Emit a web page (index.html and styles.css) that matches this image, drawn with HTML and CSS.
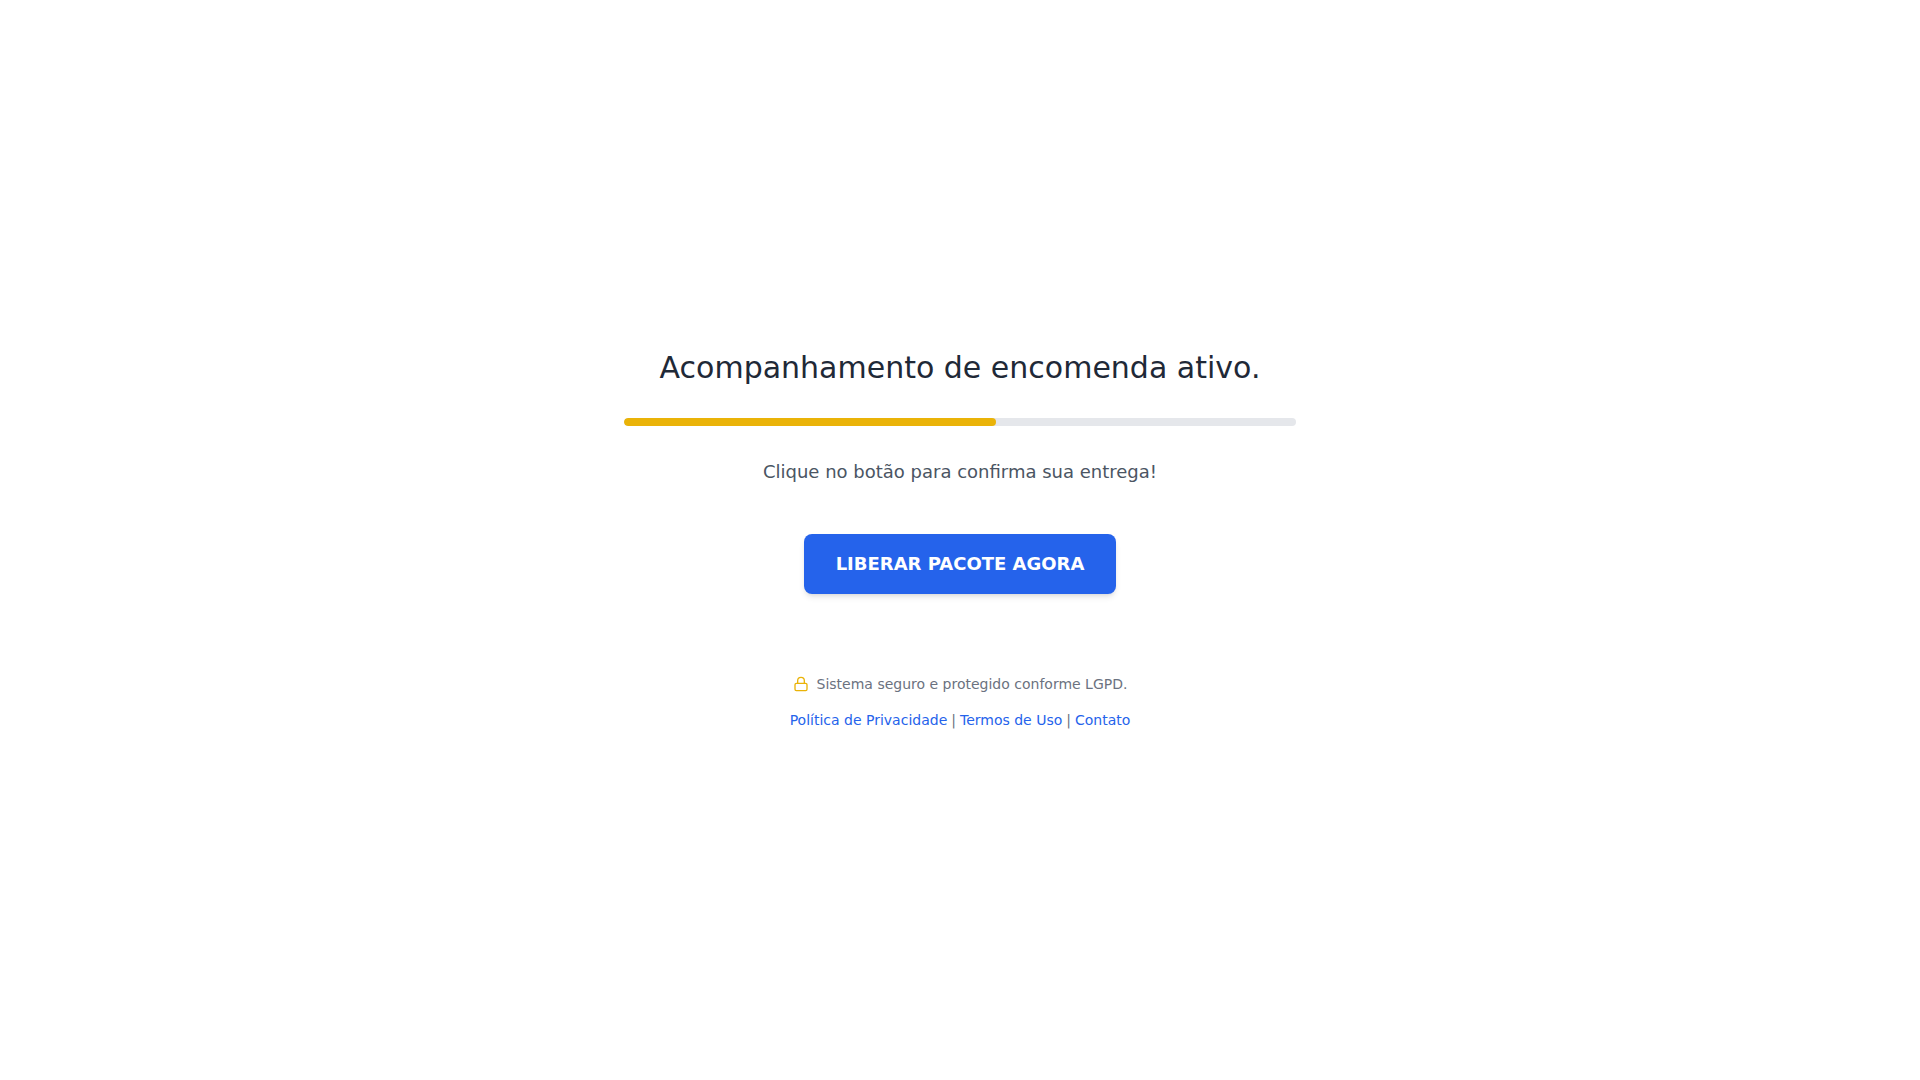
FILE: index.html
```html
<!DOCTYPE html>
<html lang="pt-BR">
<head>
<meta charset="utf-8">
<meta name="viewport" content="width=device-width, initial-scale=1">
<title>Acompanhamento de encomenda</title>
<link rel="stylesheet" href="styles.css">
</head>
<body>
<main class="tracking">
  <h1 class="title">Acompanhamento de encomenda ativo.</h1>
  <div class="progress"><div class="progress-bar" style="width: 55.4%"></div></div>
  <p class="message">Clique no botão para confirma sua entrega!</p>
  <button class="cta" type="button">LIBERAR PACOTE AGORA</button>
  <footer class="footer">
    <p class="secure">
      <svg class="lock" viewBox="0 0 24 24" fill="none" stroke="currentColor" stroke-width="2" stroke-linecap="round" stroke-linejoin="round" aria-hidden="true"><rect x="3" y="11" width="18" height="11" rx="2" ry="2"/><path d="M7 11V7a5 5 0 0 1 10 0v4"/></svg>
      <span>Sistema seguro e protegido conforme LGPD.</span>
    </p>
    <nav class="links">
      <a href="#">Política de Privacidade</a>
      <span>|</span>
      <a href="#">Termos de Uso</a>
      <span>|</span>
      <a href="#">Contato</a>
    </nav>
  </footer>
</main>
</body>
</html>
```
FILE: styles.css
```css
* {
  box-sizing: border-box;
  margin: 0;
}

body {
  min-height: 100vh;
  display: flex;
  align-items: center;
  justify-content: center;
  background: #fff;
  font-family: "DejaVu Sans", sans-serif;
}

.tracking {
  width: 100%;
  max-width: 672px;
  text-align: center;
}

.title {
  margin-bottom: 32px;
  color: #1f2937;
  font-size: 30px;
  font-weight: 400;
  line-height: 36px;
}

.progress {
  height: 8px;
  margin-bottom: 32px;
  overflow: hidden;
  border-radius: 4px;
  background: #e5e7eb;
}

.progress-bar {
  height: 100%;
  border-radius: 4px;
  background: #eab308;
}

.message {
  margin-bottom: 48px;
  color: #4b5563;
  font-size: 18px;
  line-height: 28px;
}

.cta {
  padding: 16px 32px;
  border: 0;
  border-radius: 8px;
  background: #2563eb;
  box-shadow: 0 4px 6px -1px rgb(0 0 0 / 0.1), 0 2px 4px -2px rgb(0 0 0 / 0.1);
  color: #fff;
  font-family: inherit;
  font-size: 18px;
  font-weight: 700;
  line-height: 28px;
  cursor: pointer;
}

.footer {
  margin-top: 80px;
  color: #6b7280;
  font-size: 14px;
  line-height: 20px;
}

.secure {
  display: flex;
  align-items: center;
  justify-content: center;
  gap: 8px;
  margin-bottom: 16px;
}

.lock {
  width: 16px;
  height: 16px;
  color: #eab308;
}

.links {
  display: flex;
  flex-wrap: wrap;
  justify-content: center;
  gap: 4px;
}

.links a {
  color: #2563eb;
  text-decoration: none;
}
```
